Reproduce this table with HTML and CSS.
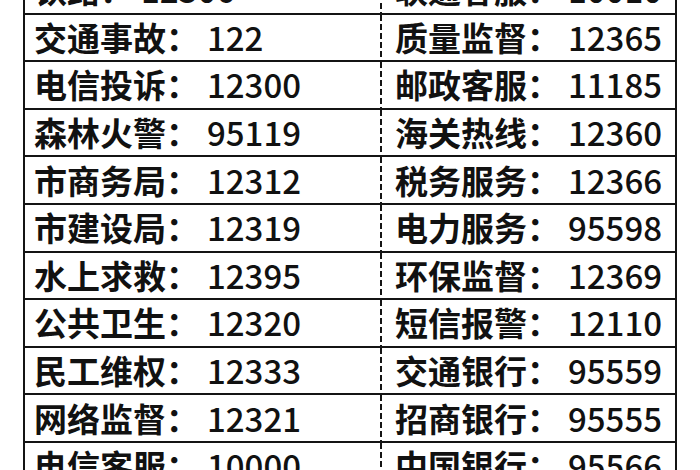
FILE: index.html
```html
<!DOCTYPE html>
<html lang="zh-CN">
<head>
<meta charset="utf-8">
<link rel="stylesheet" href="styles.css">
</head>
<body>
<div class="table">
  <div class="row"><div class="cell left"><span class="k">铁路：</span><span class="n">12306</span></div><div class="cell right"><span class="k">联通客服：</span><span class="n">10010</span></div></div>
  <div class="row"><div class="cell left"><span class="k">交通事故：</span><span class="n">122</span></div><div class="cell right"><span class="k">质量监督：</span><span class="n">12365</span></div></div>
  <div class="row"><div class="cell left"><span class="k">电信投诉：</span><span class="n">12300</span></div><div class="cell right"><span class="k">邮政客服：</span><span class="n">11185</span></div></div>
  <div class="row"><div class="cell left"><span class="k">森林火警：</span><span class="n">95119</span></div><div class="cell right"><span class="k">海关热线：</span><span class="n">12360</span></div></div>
  <div class="row"><div class="cell left"><span class="k">市商务局：</span><span class="n">12312</span></div><div class="cell right"><span class="k">税务服务：</span><span class="n">12366</span></div></div>
  <div class="row"><div class="cell left"><span class="k">市建设局：</span><span class="n">12319</span></div><div class="cell right"><span class="k">电力服务：</span><span class="n">95598</span></div></div>
  <div class="row"><div class="cell left"><span class="k">水上求救：</span><span class="n">12395</span></div><div class="cell right"><span class="k">环保监督：</span><span class="n">12369</span></div></div>
  <div class="row"><div class="cell left"><span class="k">公共卫生：</span><span class="n">12320</span></div><div class="cell right"><span class="k">短信报警：</span><span class="n">12110</span></div></div>
  <div class="row"><div class="cell left"><span class="k">民工维权：</span><span class="n">12333</span></div><div class="cell right"><span class="k">交通银行：</span><span class="n">95559</span></div></div>
  <div class="row"><div class="cell left"><span class="k">网络监督：</span><span class="n">12321</span></div><div class="cell right"><span class="k">招商银行：</span><span class="n">95555</span></div></div>
  <div class="row"><div class="cell left"><span class="k">电信客服：</span><span class="n">10000</span></div><div class="cell right"><span class="k">中国银行：</span><span class="n">95566</span></div></div>
</div>
</body>
</html>
```
FILE: styles.css
```css
html, body {
  margin: 0;
  padding: 0;
  background: #ffffff;
  overflow: hidden;
}
body {
  width: 700px;
  height: 470px;
  font-family: "Noto Sans CJK SC", "Noto Sans", sans-serif;
  color: #111111;
}
.table {
  margin-top: -33px;
  margin-left: 23px;
  width: 654px;
  border-left: 2px solid #141414;
  border-right: 2px solid #141414;
  box-sizing: border-box;
}
.row {
  display: grid;
  grid-template-columns: 357px 1fr;
  height: 47.6px;
  box-sizing: border-box;
  border-bottom: 2px solid #141414;
}
.cell {
  display: flex;
  align-items: center;
  font-size: 33px;
  line-height: 1;
  white-space: nowrap;
}
.left {
  padding-left: 9px;
  background-image: repeating-linear-gradient(to bottom, #141414 0 6px, transparent 6px 9px);
  background-size: 2px 100%;
  background-position: right top;
  background-repeat: no-repeat;
}
.right {
  padding-left: 13px;
}
.k {
  font-weight: 700;
}
.n {
  font-weight: 500;
  margin-left: 8px;
}
```
